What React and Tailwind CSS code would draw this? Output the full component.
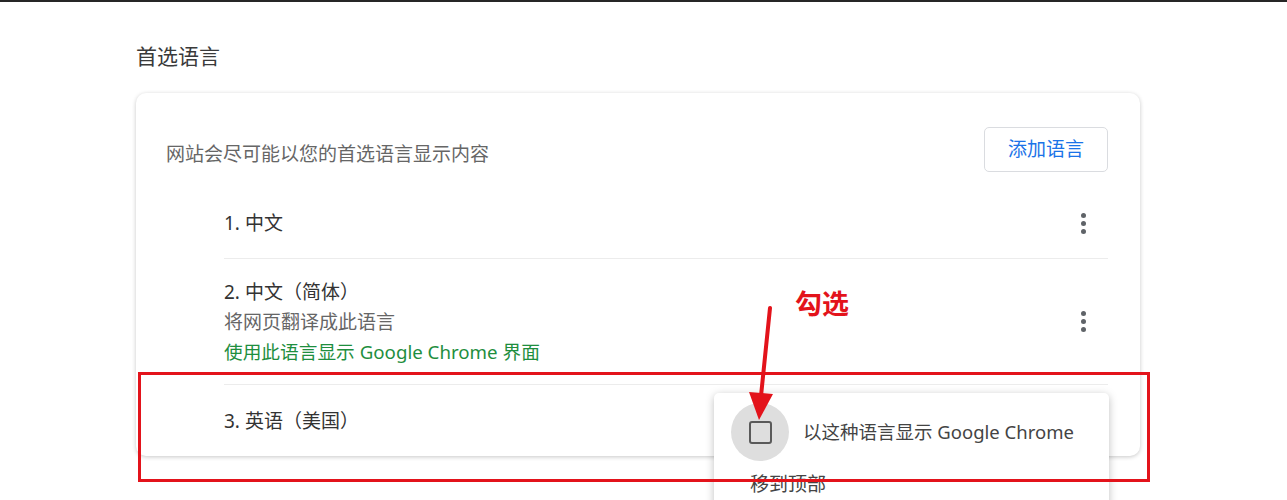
import { Fragment } from 'react'

const languages = [
    { id: 1, name: '1. 中文', height: 'h-[70px]' },
    {
        id: 2,
        name: '2. 中文（简体）',
        height: 'h-[125px]',
        translate: '将网页翻译成此语言',
        uiNote: '使用此语言显示 Google Chrome 界面',
    },
    { id: 3, name: '3. 英语（美国）', height: 'h-[71px]', noMenu: true },
]

function Kebab() {
    return (
        <div className="w-10 h-10 mr-[5px] flex flex-col items-center justify-center gap-[3px]">
            <span className="w-[5px] h-[5px] rounded-full bg-[#5f6368]" />
            <span className="w-[5px] h-[5px] rounded-full bg-[#5f6368]" />
            <span className="w-[5px] h-[5px] rounded-full bg-[#5f6368]" />
        </div>
    )
}

function LanguageRow({ lang }) {
    return (
        <div className={`flex items-center justify-between ${lang.height}`}>
            <div className="flex flex-col leading-[30px]">
                <span className="text-[#333]">{lang.name}</span>
                {lang.translate && <span className="text-[#666]">{lang.translate}</span>}
                {lang.uiNote && <span className="text-[#1e8e3e] text-[18.7px]">{lang.uiNote}</span>}
            </div>
            {!lang.noMenu && <Kebab />}
        </div>
    )
}

export default function App() {
    return (
        <div
            className="relative w-full h-[500px] overflow-hidden bg-white text-[19px]"
            style={{ fontFamily: '"Noto Sans", "Noto Sans CJK SC", sans-serif' }}
        >
            <div className="h-[2px] bg-[#262626]" />

            <div className="pl-[136px] pr-[147px]">
                <h2 className="pt-[39px] text-[21px] leading-[30px] text-[#3a3a3a]">首选语言</h2>

                {/* Card */}
                <div className="mt-[22px] rounded-[10px] bg-white shadow-[0_1px_4px_rgba(0,0,0,0.22)] pl-[30px] pr-[32px] pt-[34px]">
                    <div className="flex items-start justify-between">
                        <span className="pt-[12px] leading-[30px] text-[#666]">网站会尽可能以您的首选语言显示内容</span>
                        <button className="h-[45px] px-[23px] rounded-[5px] border border-[#dadce0] text-[#1a73e8]">
                            添加语言
                        </button>
                    </div>

                    <div className="mt-[16px] pl-[58px]">
                        {languages.map((lang, i) => (
                            <Fragment key={lang.id}>
                                {i > 0 && <div className="h-px bg-[#ececec]" />}
                                <LanguageRow lang={lang} />
                            </Fragment>
                        ))}
                    </div>
                </div>
            </div>

            {/* Dropdown menu for row 3 */}
            <div className="absolute left-[714px] top-[393px] w-[395px] h-[140px] rounded-[5px] bg-white shadow-[0_2px_8px_rgba(0,0,0,0.25)]">
                <div className="flex items-center h-[78px] pl-[17px]">
                    <div className="w-[58px] h-[58px] rounded-full bg-[#dedede] flex items-center justify-center">
                        <div className="w-[23px] h-[23px] rounded-[3px] border-[2.5px] border-[#5a5a5a]" />
                    </div>
                    <span className="ml-[14px] text-[18.5px] text-[#444]">以这种语言显示 Google Chrome</span>
                </div>
                <div className="pl-[36px] text-[#444] leading-[30px] -mt-[2px]">移到顶部</div>
            </div>

            {/* Annotation */}
            <div className="absolute left-[138px] top-[372px] w-[1012px] h-[110px] border-[3px] border-[#e3131b]" />
            <span className="absolute left-[795px] top-[286px] text-[27px] font-bold leading-[36px] text-[#e3131b]">
                勾选
            </span>
            <svg className="absolute left-[740px] top-[300px]" width="50" height="130" viewBox="0 0 50 130">
                <line x1="30" y1="8" x2="21" y2="96" stroke="#e3131b" strokeWidth="4" strokeLinecap="round" />
                <polygon points="9,92 33,94 19,120" fill="#e3131b" />
            </svg>
        </div>
    )
}
